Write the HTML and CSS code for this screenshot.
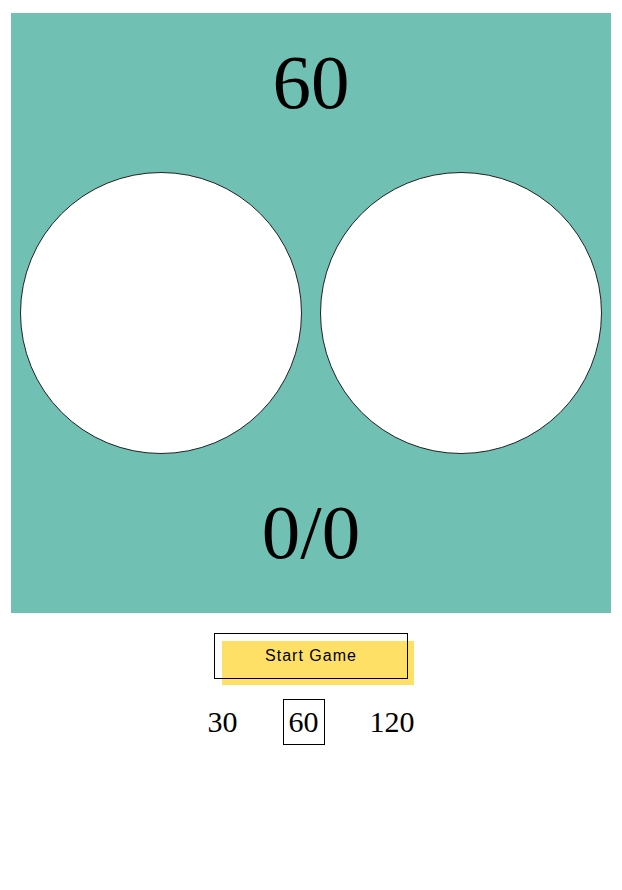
FILE: index.html
```html
<!DOCTYPE html>
<html>
<head>
<meta charset="utf-8">
<link rel="stylesheet" href="styles.css">
</head>
<body>
<div class="page">
  <div class="board">
    <div class="timer">60</div>
    <div class="circles">
      <div class="circle"></div>
      <div class="circle"></div>
    </div>
    <div class="score">0/0</div>
  </div>
  <button class="start"><span class="label">Start Game</span></button>
  <div class="options">
    <span class="opt">30</span>
    <span class="opt selected">60</span>
    <span class="opt">120</span>
  </div>
</div>
</body>
</html>
```
FILE: styles.css
```css
html, body {
  margin: 0;
  background: #fff;
}
.page {
  padding-top: 13px;
  display: flex;
  flex-direction: column;
  align-items: center;
  font-family: "Liberation Serif", "Times New Roman", serif;
}
.board {
  width: 600px;
  height: 600px;
  box-sizing: border-box;
  background: #70c1b3;
  padding-top: 29px;
  display: flex;
  flex-direction: column;
  align-items: center;
}
.timer, .score {
  font-size: 77px;
  line-height: 80px;
  height: 80px;
  color: #000;
}
.circles {
  display: flex;
  margin-top: 50px;
  margin-bottom: 38px;
}
.circle {
  width: 280px;
  height: 280px;
  border: 1px solid #222;
  border-radius: 50%;
  background: #fff;
  margin: 0 9px;
}
.start {
  position: relative;
  margin-top: 20px;
  width: 194px;
  height: 46px;
  box-sizing: border-box;
  border: none;
  background: transparent;
  font-family: "Liberation Sans", Arial, sans-serif;
  font-size: 16px;
  letter-spacing: 1px;
  color: #000;
  padding: 0;
  z-index: 0;
}
.start::before {
  content: "";
  position: absolute;
  left: 8px;
  top: 8px;
  width: 192px;
  height: 44px;
  background: #ffe066;
  z-index: 0;
}
.start::after {
  content: "";
  position: absolute;
  left: 0;
  top: 0;
  right: 0;
  bottom: 0;
  border: 1px solid #000;
  z-index: 1;
}
.label {
  position: relative;
  z-index: 2;
}
.options {
  margin-top: 20px;
  display: flex;
  align-items: center;
  gap: 39px;
}
.opt {
  font-size: 30px;
  line-height: 34px;
  padding: 5px 5px;
  border: 1px solid transparent;
}
.opt.selected {
  border-color: #000;
}
```
